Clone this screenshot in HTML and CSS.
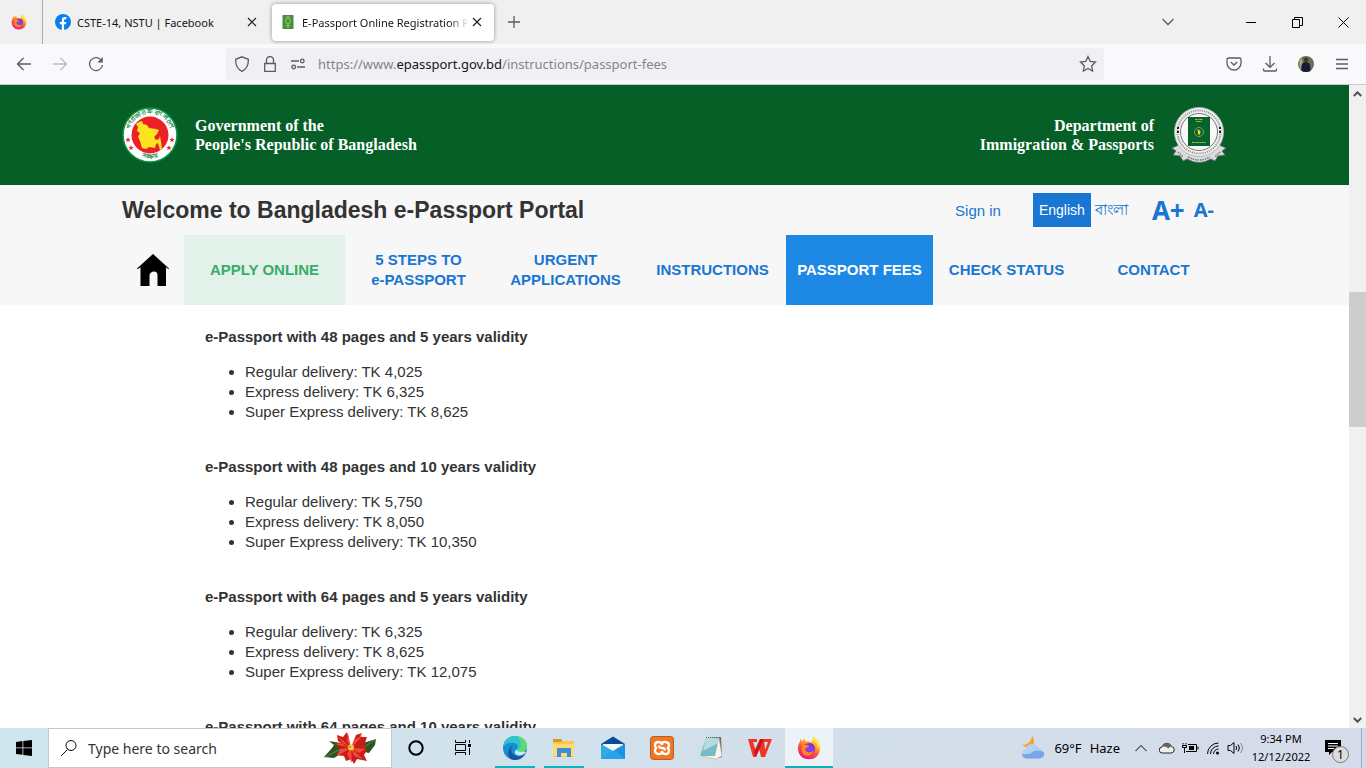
FILE: index.html
```html
<!DOCTYPE html>
<html lang="en">
<head>
<meta charset="utf-8">
<title>E-Passport Online Registration Portal</title>
<link rel="stylesheet" href="styles.css">
</head>
<body>
<svg class="defs" aria-hidden="true">
  <defs>
    <linearGradient id="flame" x1="0.8" y1="0" x2="0.3" y2="1">
      <stop offset="0" stop-color="#fff44f"/><stop offset="0.35" stop-color="#ffa51f"/><stop offset="0.65" stop-color="#ff4a40"/><stop offset="1" stop-color="#e5158a"/>
    </linearGradient>
    <symbol id="firefox" viewBox="0 0 24 24">
      <path d="M16.500 0.500c1.500 2 3.500 3.400 4.600 5.500 3.600 5.700 2.100 17.300-9.100 17.300C5.300 23.300 1 18.500 1 12.500c0-2.700.7-5 2-7l.2-2.500 2.300 2.200 1.800-2.900 1.300 3.200c2-.7 4.300-.2 6 1z" fill="url(#flame)"/>
      <path d="M15.800.5c-.8 3 .5 4.300 2.500 6 2.300 2 2.700 5 1.700 7.500 3.500-4 1.500-8.500-.3-10.500C18.300 2 16.700 1.500 15.800.5z" fill="#ffe443"/>
      <circle cx="12" cy="13" r="6" fill="#8b3be8"/>
      <path d="M5.500 9c3-.8 5.500.3 7 1.800-3 0-2.800 1.500-4.500 2.300.5 3.800 6 4.500 8.500 1.500-.8 4.500-5 6-8.500 4.500S4 13 5.500 9z" fill="#ff8a16"/>
      <path d="M13 7c3 .5 5 3 4.500 6.500-.5-2-1.500-3.500-4-4.500z" fill="#6e2fd0"/>
    </symbol>
  </defs>
</svg>
<div class="desktop">
  <div class="tabbar">
    <button class="pinned" aria-label="Firefox View"><svg width="16" height="16"><use href="#firefox"/></svg></button>
    <div class="tab">
      <svg width="16" height="16" viewBox="0 0 16 16"><circle cx="8" cy="8" r="8" fill="#0d7df2"/><path d="M6.800 16V10.300H4.800V8h2V6.300c0-2.100 1.200-3.200 3-3.200l1.600.1v2h-1c-1 0-1.300.6-1.300 1.200V8h2.200l-.4 2.300H9.100V16z" fill="#fff"/></svg>
      <span class="tab-title">CSTE-14, NSTU | Facebook</span>
      <button class="tab-close" aria-label="Close tab"><svg width="10" height="10" viewBox="0 0 10 10"><path d="M1 1l8 8M9 1L1 9" class="dark"/></svg></button>
    </div>
    <div class="tab active">
      <svg width="16" height="16" viewBox="0 0 16 16"><path d="M2.500 1h11v14h-11z" fill="#3f9142"/><circle cx="8" cy="7" r="2.500" fill="none" stroke="#a9c653"/><path d="M6 3h4M6 11.500h4M8 10v4" stroke="#a9c653"/></svg>
      <span class="tab-title fade">E-Passport Online Registration Portal</span>
      <button class="tab-close" aria-label="Close tab"><svg width="10" height="10" viewBox="0 0 10 10"><path d="M1 1l8 8M9 1L1 9" class="dark"/></svg></button>
    </div>
    <button class="new-tab" aria-label="New tab"><svg width="12" height="12" viewBox="0 0 12 12"><path d="M6 0v12M0 6h12" class="line"/></svg></button>
    <div class="window-controls">
      <button class="list-tabs" aria-label="List all tabs"><svg width="14" height="8" viewBox="0 0 14 8"><path d="M1.500 1L7 6.500 12.500 1" class="line"/></svg></button>
      <button aria-label="Minimize"><svg width="11" height="11" viewBox="0 0 11 11"><path d="M0 5.500h10" class="black"/></svg></button>
      <button aria-label="Restore"><svg width="11" height="11" viewBox="0 0 11 11"><path d="M.5 2.500h7v8h-7zM2.500 2V.5h8v8H8" class="black"/></svg></button>
      <button aria-label="Close"><svg width="11" height="11" viewBox="0 0 11 11"><path d="M.5.500l10 10M10.500.500l-10 10" class="black"/></svg></button>
    </div>
  </div>

  <div class="toolbar">
    <div class="nav-buttons">
      <button aria-label="Back"><svg width="16" height="16" viewBox="0 0 16 16"><path d="M15 8H1.500M7.500 2L1.500 8l6 6" class="line"/></svg></button>
      <button aria-label="Forward" disabled><svg width="16" height="16" viewBox="0 0 16 16"><path d="M1 8h13.500M8.500 2l6 6-6 6" class="line"/></svg></button>
      <button aria-label="Reload"><svg width="16" height="16" viewBox="0 0 16 16"><path d="M13.500 4.500A6.500 6.500 0 1 0 14.500 9" class="line"/><path d="M14.800 1v5.500H9.300z" fill="#5b5b66"/></svg></button>
    </div>
    <div class="address">
      <svg width="16" height="16" viewBox="0 0 16 16"><path d="M8 .8l6.300 2.500c.3 5.500-1.500 9.700-6.300 12C3.200 13 1.400 8.800 1.700 3.300z" class="line"/></svg>
      <svg width="16" height="16" viewBox="0 0 16 16"><path d="M2.700 7.500h10.600v8H2.700zM4.500 7V4a3.500 3.500 0 0 1 7 0v3" class="line"/></svg>
      <svg width="16" height="16" viewBox="0 0 16 16"><path d="M1 5h8M7 11h8" class="line"/><circle cx="12.300" cy="5" r="1.800" class="line"/><circle cx="3.700" cy="11" r="1.800" class="line"/></svg>
      <p class="url">https://www.<span class="domain">epassport.gov.bd</span>/instructions/passport-fees</p>
      <button aria-label="Bookmark"><svg width="18" height="18" viewBox="0 0 18 18"><path d="M9 1.500l2.300 4.800 5.200.7-3.800 3.700.9 5.300L9 13.400 4.400 16l.9-5.300L1.500 7l5.200-.7z" class="line"/></svg></button>
    </div>
    <div class="tool-buttons">
      <button aria-label="Pocket"><svg width="16" height="16" viewBox="0 0 16 16"><path d="M2.500 2h11q1.500 0 1.500 1.500V7a7 7 0 0 1-14 0V3.500Q1 2 2.500 2zM4.800 6L8 9l3.200-3" class="line"/></svg></button>
      <button aria-label="Downloads"><svg width="16" height="16" viewBox="0 0 16 16"><path d="M8 0v11M3.500 7L8 11.300 12.500 7M1.500 12.500v1.500q0 1 1 1h11q1 0 1-1v-1.500" class="line"/></svg></button>
      <button aria-label="Account"><svg width="16" height="16" viewBox="0 0 16 16"><circle cx="8" cy="8" r="8" fill="#66704f"/><path d="M1 4l3-2 1 8-3 3z" fill="#a6a789"/><path d="M3.500 15c0-5-1-8 4.500-9 5.500 1 4 5 4.500 9-2.500 1.300-6.500 1.300-9 0z" fill="#171a35"/><circle cx="8" cy="3.800" r="2.300" fill="#4c302a"/></svg></button>
      <button aria-label="Menu"><svg width="14" height="14" viewBox="0 0 14 14"><path d="M1 2.500h12M1 7h12M1 11.500h12" class="line"/></svg></button>
    </div>
  </div>

  <div class="viewport">
    <div class="page">
      <header class="banner">
        <div class="container banner-inner">
          <svg width="56" height="56" viewBox="0 0 56 56" role="img" aria-label="Government seal">
            <circle cx="28" cy="28" r="27" fill="#fff" stroke="#0a9444" stroke-width="1.500"/>
            <path id="arc-top" d="M7.500 32A21 21 0 1 1 48.500 32" fill="none"/>
            <path id="arc-bottom" d="M11 45A25 25 0 0 0 45 45" fill="none"/>
            <text class="seal-text" lang="bn" text-anchor="middle"><textPath href="#arc-top" startOffset="50%">গণপ্রজাতন্ত্রী বাংলাদেশ</textPath></text>
            <text class="seal-text" lang="bn" text-anchor="middle"><textPath href="#arc-bottom" startOffset="50%">সরকার</textPath></text>
            <circle cx="28" cy="28" r="18.500" fill="#ed2027"/>
            <path d="M17 15l3-1 1 3 4 1 2 3 7 1 3 1-2 4-3 3 2 3 3-1 1-3 1 6 1 7-2 1-2-7-2 1-1 4-6-1-3 2-4-1-2-7-2-4 2-4-3-2 1-4-2-3z" fill="#fce421"/>
            <path id="star" d="M6 30l.7 2 2 .1-1.600 1.200.6 2L6 34.100l-1.700 1.200.6-2-1.600-1.200 2-.1z" fill="#ed2027"/>
            <use href="#star" x="3" y="8"/><use href="#star" x="44"/><use href="#star" x="41" y="8"/>
          </svg>
          <p class="org">Government of the<br>People's Republic of Bangladesh</p>
          <p class="org right">Department of<br>Immigration &amp; Passports</p>
          <svg width="56" height="58" viewBox="0 0 56 58" role="img" aria-label="Department seal">
            <path d="M1 42l7-3 6 5q14 10 28 0l6-5 7 3-4 3 3 4-7 1-3 5-4-2q-12 7-24 0l-4 2-3-5-7-1 3-4z" fill="#dcdcdc" stroke="#667" stroke-width=".8"/>
            <path d="M7 46l5 5M49 46l-5 5M17 51q11 6 22 0" fill="none" stroke="#777" stroke-width="1.500" stroke-dasharray="1.500 1"/>
            <circle cx="28" cy="26" r="24.500" fill="#f1f1f1" stroke="#b5b5b5"/>
            <circle cx="28" cy="26" r="21.500" fill="none" stroke="#999" stroke-width="2" stroke-dasharray="1.200 1"/>
            <circle cx="28" cy="26" r="18.500" fill="#f8f8f8" stroke="#777"/>
            <path d="M17 11h22v29H17z" fill="#07632b"/>
            <circle cx="28" cy="26" r="4.500" fill="none" stroke="#7f9a61"/><path d="M26.500 23l3 2-.5 4-2-1z" fill="#f0d52b"/>
            <path d="M24 13.500h8M25 15.500h6M21 36.500h14" stroke="#b6b751" stroke-dasharray="2 .5"/>
            <path d="M7 21v2M7 25v2M49 21v2M49 25v2" stroke="#222" stroke-width="2"/>
          </svg>
        </div>
      </header>
      <div class="heading">
        <div class="container heading-inner">
          <h1>Welcome to Bangladesh e-Passport Portal</h1>
          <a class="sign-in" href="#">Sign in</a>
          <div class="languages">
            <button class="lang current">English</button>
            <button class="lang bangla" lang="bn">বাংলা</button>
          </div>
          <div class="font-size"><button class="larger">A+</button><button class="smaller">A-</button></div>
        </div>
        <nav class="container menu">
          <a href="#" aria-label="Home"><svg width="32" height="34" viewBox="0 0 32 34"><path d="M16 1l16 14.500-.5.800-2.500-2V33h-8.500V22q0-3.500-3.500-3.500T12.500 22v11H3.500V14.300l-3 2-.5-.8z" fill="#000"/></svg></a>
          <a href="#" class="apply">APPLY ONLINE</a>
          <a href="#">5 STEPS TO<br>e-PASSPORT</a>
          <a href="#">URGENT<br>APPLICATIONS</a>
          <a href="#">INSTRUCTIONS</a>
          <a href="#" class="selected">PASSPORT FEES</a>
          <a href="#">CHECK STATUS</a>
          <a href="#">CONTACT</a>
        </nav>
      </div>
      <main class="fees">
        <section>
          <h2>e-Passport with 48 pages and 5 years validity</h2>
          <ul><li>Regular delivery: TK 4,025</li><li>Express delivery: TK 6,325</li><li>Super Express delivery: TK 8,625</li></ul>
        </section>
        <section>
          <h2>e-Passport with 48 pages and 10 years validity</h2>
          <ul><li>Regular delivery: TK 5,750</li><li>Express delivery: TK 8,050</li><li>Super Express delivery: TK 10,350</li></ul>
        </section>
        <section>
          <h2>e-Passport with 64 pages and 5 years validity</h2>
          <ul><li>Regular delivery: TK 6,325</li><li>Express delivery: TK 8,625</li><li>Super Express delivery: TK 12,075</li></ul>
        </section>
        <section>
          <h2>e-Passport with 64 pages and 10 years validity</h2>
        </section>
      </main>
    </div>
    <div class="scrollbar">
      <button aria-label="Scroll up"><svg width="9" height="6" viewBox="0 0 9 6"><path d="M.8 5L4.500 1.300 8.200 5" class="arrow"/></svg></button>
      <div class="track"><div class="thumb"></div></div>
      <button aria-label="Scroll down"><svg width="9" height="6" viewBox="0 0 9 6"><path d="M.8 1l3.700 3.700L8.200 1" class="arrow"/></svg></button>
    </div>
  </div>

  <footer class="taskbar">
    <button class="start" aria-label="Start"><svg width="16" height="16" viewBox="0 0 16 16"><path d="M0 2l6.500-.9v6.400H0zM7.300 1L16 0v7.500H7.300zM0 8.300h6.500v6.500L0 14zM7.300 8.300H16V16l-8.700-1.100z"/></svg></button>
    <label class="search">
      <svg width="18" height="18" viewBox="0 0 18 18"><circle cx="11" cy="6.500" r="5" class="glyph"/><path d="M7.500 10.500L1 17" class="glyph"/></svg>
      <input type="text" placeholder="Type here to search" aria-label="Search">
      <svg width="54" height="34" viewBox="0 0 54 34">
        <path d="M18 12L6 10l5 4-2 3-8 9 10 1 10-6zM37 13l16-5-1 6-6 8-9-2z" fill="#2e5424"/>
        <path d="M2 26l16-8M38 18l14-9" stroke="#668447" fill="none"/>
        <path d="M28 17L24 1l-4 5-6-2 1 6 3 2-7 1 8 5-6 6 8 1 2 5 5-2 3 5 3-5 10 2-3-6 3-5-3-4 3-9-7 0 2-4-6 2z" fill="#c91d18"/>
        <path d="M28 17L15 5l6 9zM28 17l-3-15-1 8zM28 17l12-13-9 5zM28 17l14 1-6 4zM28 17l12 11-9-3zM28 17l1 15-5-9zM28 17l-14 8 3-7zM28 17l-16-4 8-1z" fill="#f5483a"/>
        <circle cx="28" cy="16.500" r="3" fill="#f2cf32"/><circle cx="27" cy="16" r="1" fill="#93992c"/>
      </svg>
    </label>
    <div class="apps">
      <button class="system" aria-label="Cortana"><svg width="18" height="18" viewBox="0 0 18 18"><circle cx="9" cy="9" r="6.700" fill="none" stroke="#000" stroke-width="2"/></svg></button>
      <button class="system" aria-label="Task view"><svg width="18" height="18" viewBox="0 0 18 18"><path d="M1.500 1v2.500h10V1M1.500 5.500h10v6h-10zM1.500 16v-2.500h10V16M15.500 1v3M15.500 9v7" class="glyph"/><path d="M14 5h3v3h-3z"/></svg></button>
      <button class="open" aria-label="Edge"><svg width="24" height="24" viewBox="0 0 24 24"><circle cx="12" cy="12" r="12" fill="#168ed4"/><path d="M0 11C1 3 7 0 12 0c7 0 12 5 12 10 0 4-3 6-6 6s-5-1-4-3c1-1 2-5-3-6C6 6 2 8 0 11z" fill="#32c4cc"/><path d="M14 .2C20 1 24 5 24 10c0 4-3 6-6 6s-4.500-1-4-2.500C20 13 19 5 14 .2z" fill="#5fdc70"/><path d="M10 9c-3 3-2 8 1 10 4 2.500 8 1.500 11-1-3 5-8 7-13 5.500C3 21 5 12 10 9z" fill="#1455a0"/><path d="M14 13.500c-.5 2 3 3 6 2l3 .5c-2 3-6 4-9 3-3-1.500-3-4 0-5.500z" fill="#d5e6ee"/></svg></button>
      <button class="open" aria-label="File Explorer"><svg width="24" height="24" viewBox="0 0 24 24"><path d="M1 3h8l2 2h10q1 0 1 1v15H1z" fill="#f9c846"/><path d="M1 3h8l1 1.500L9 6H1z" fill="#d69b16"/><path d="M1 8h21v12H1z" fill="#ffdb73"/><path d="M5 21v-8q0-1 1-1h12q1 0 1 1v8h-4v-4H9v4z" fill="#3c8edb"/></svg></button>
      <button aria-label="Mail"><svg width="24" height="24" viewBox="0 0 24 24"><path d="M0 8l12-7.500L24 8v3H0z" fill="#0b4b9c"/><path d="M2 8h20v10H2z" fill="#f4f7fa"/><path d="M0 8l12 7L24 8v15H0z" fill="#2fa9e8"/><path d="M24 8v15L12 15z" fill="#1c92de"/><path d="M0 23l14-9 10 9z" fill="#27a4e9"/></svg></button>
      <button aria-label="XAMPP"><svg width="24" height="24" viewBox="0 0 24 24"><rect x=".5" y=".5" width="23" height="23" rx="3" fill="#f17822" stroke="#b45c22"/><path d="M12 9Q12 6 8.500 6T5 9q0 2.500 2 3-2 .5-2 3t3.500 3T12 15q0 3 3.500 3t3.500-3q0-2.500-2-3 2-.5 2-3t-3.500-3T12 9zM9 9.500q0 2.500 3 2.500t3 2.500" fill="none" stroke="#fff" stroke-width="2.300"/></svg></button>
      <button aria-label="Notepad"><svg width="24" height="24" viewBox="0 0 24 24"><path d="M7 2l15-1 1 20-3 1z" fill="#70695b"/><path d="M20 2l3 18-6 3-14-3z" fill="#f7f5e9" stroke="#aaa698" stroke-width=".5"/><path d="M7 2h13l-4 18H1z" fill="#79bac9"/><path d="M7 2h13l-1 5L4 15z" fill="#b4dce0"/><path d="M7 1.500h13" stroke="#667" stroke-dasharray="1 1"/></svg></button>
      <button aria-label="WPS Office"><svg width="24" height="24" viewBox="0 0 24 24"><path d="M0 3h9v3H5l3 9 4-12h4l1 11 3-8h-6l1-3h9l-7 18h-4l-2-9-3 9H5z" fill="#f33323"/><path d="M12 3h4l-8 18-2-5z" fill="#c51719"/></svg></button>
      <button class="open focused" aria-label="Firefox"><svg width="24" height="24"><use href="#firefox"/></svg></button>
    </div>
    <div class="tray">
      <button class="weather"><svg width="26" height="26" viewBox="0 0 26 26"><path d="M12 1c4 5 2 10-3 13l-7-4c5 0 9-3 10-9z" fill="#f5a623"/><path d="M6 23.500a5 5 0 0 1-.5-9.500 7 7 0 0 1 13-1A5.500 5.500 0 0 1 19.500 23.500z" fill="#b5d0f5"/><path d="M2 19q8 1 12-3 6-1 10 1 1 6-5 6.500H6q-4-1-4-4.500z" fill="#78a5e6"/></svg><span>69°F</span><span>Haze</span></button>
      <button class="more" aria-label="Hidden icons"><svg width="14" height="10" viewBox="0 0 14 10"><path d="M1.500 8L7 2.500 12.500 8" class="glyph"/></svg></button>
      <button aria-label="OneDrive"><svg width="16" height="12" viewBox="0 0 16 12"><path d="M3.500 11a3 3 0 0 1-.5-6 5 5 0 0 1 9.500-.5A3.300 3.300 0 0 1 12.500 11z" fill="#eee" stroke="#222"/><path d="M3 5a5 5 0 0 1 9.500-.5q-2 0-3 2Q6 3.500 3 5z" fill="#666"/></svg></button>
      <button aria-label="Battery"><svg width="17" height="12" viewBox="0 0 17 12"><path d="M6 2.500h8.500v7H4M16 4.500v3M1 1v1.500M4 1v1.500M.5 3.500h4v2h-4zM2.500 6v5" class="glyph"/><path d="M7 4h5v4H7z"/></svg></button>
      <button aria-label="Wi-Fi"><svg width="14" height="14" viewBox="0 0 14 14"><path d="M1.500 13A11 11 0 0 1 12.500 2M4.500 13a8 8 0 0 1 8-8M7.500 13a5 5 0 0 1 5-5" class="glyph"/><circle cx="11.500" cy="12" r="1.500"/></svg></button>
      <button aria-label="Volume"><svg width="17" height="14" viewBox="0 0 17 14"><path d="M1 4.500h2.500L7 1.500v11l-3.500-3H1zM9 5q1.500 2 0 4M11 3.500q3 3.500 0 7" class="glyph"/><path d="M13.500 2q4 5 0 10" fill="none" stroke="#888"/></svg></button>
      <div class="clock"><time>9:34 PM</time><time>12/12/2022</time></div>
      <button class="notifications" aria-label="Notifications, 1 new"><svg width="16" height="16" viewBox="0 0 16 16"><path d="M0 0h16v12H7l-3 3v-3H0z"/><path d="M3 3.500h10M3 6h10M3 8.500h6" stroke="#fff"/></svg><span class="badge">1</span></button>
      <div class="show-desktop"></div>
    </div>
  </footer>
</div>
</body>
</html>
```

FILE: styles.css
```css
* { box-sizing: border-box; }
body { margin: 0; font-family: "Liberation Sans", Arial, sans-serif; color: #333; }
h1, h2, p, ul { margin: 0; }
button { margin: 0; padding: 0; border: 0; background: none; color: inherit; font: inherit; display: flex; align-items: center; justify-content: center; }
a { text-decoration: none; color: #1976d2; }
svg { display: block; flex: none; }
.defs { position: absolute; width: 0; height: 0; }
.line { fill: none; stroke: #5b5b66; stroke-width: 1.3; }
.dark { fill: none; stroke: #222; stroke-width: 1.2; }
.black, .glyph { fill: none; stroke: #000; }
.arrow { fill: none; stroke: #505050; stroke-width: 2; }

.desktop { height: 100vh; display: flex; flex-direction: column; overflow: hidden; }
.tabbar, .toolbar, .taskbar { flex: none; display: flex; align-items: center; }

/* Browser chrome */
.tabbar { height: 44px; background: #f0f0f0; font: 11px "Noto Sans", "Open Sans", sans-serif; color: #15141a; }
.pinned { width: 43px; height: 44px; padding-right: 4px; border-right: 1px solid #aaa; }
.tab { width: 222px; height: 37px; margin-left: 4px; padding: 0 9px 0 8px; display: flex; align-items: center; border-radius: 4px; }
.tab.active { margin-left: 3px; background: #fff; box-shadow: 0 0 4px rgba(0, 0, 0, .4); }
.tab-title { flex: 1; min-width: 0; margin-left: 6px; overflow: hidden; white-space: nowrap; }
.fade { mask-image: linear-gradient(to right, #000 88%, transparent); }
.tab-close { width: 16px; height: 16px; }
.new-tab { width: 40px; height: 36px; }
.window-controls { margin-left: auto; display: flex; height: 44px; }
.window-controls button { width: 46px; }
.window-controls .list-tabs { width: 36px; margin-right: 42px; }
.toolbar { height: 41px; background: #f9f9fb; border-bottom: 1px solid #ccc; }
.nav-buttons { width: 226px; padding-left: 6px; display: flex; }
.nav-buttons button { width: 36px; height: 36px; }
.nav-buttons button:disabled { opacity: .4; }
.address { flex: 1; height: 32px; padding: 0 7px 0 8px; display: flex; align-items: center; gap: 12px; background: #f0f0f4; border-radius: 4px; }
.url { flex: 1; font: 13px "Noto Sans", "Open Sans", sans-serif; color: #84848b; }
.domain { color: #15141a; }
.tool-buttons { width: 262px; padding-right: 6px; display: flex; justify-content: flex-end; }
.tool-buttons button { width: 36px; height: 36px; }

/* Page */
.viewport { flex: 1; min-height: 0; display: flex; background: #fff; }
.page { flex: 1; min-width: 0; overflow: hidden; }
.container { max-width: 1105px; margin: 0 auto; }
.banner { background: #055f26; color: #fff; }
.banner-inner { height: 100px; display: flex; align-items: center; gap: 17px; }
.seal-text { font: bold 6px "Noto Sans", sans-serif; fill: #0b7a3b; }
.org { font: bold 16px/19px "Liberation Serif", serif; }
.org.right { margin-left: auto; text-align: right; }
.heading { background: #f7f7f7; }
.heading-inner { min-height: 50px; display: flex; align-items: center; }
h1 { flex: 1; font-size: 23px; line-height: 28px; }
.sign-in { margin-right: 32px; font-size: 15px; }
.languages { display: flex; font-size: 14px; color: #1976d2; }
.lang { height: 34px; padding: 0 6px; }
.lang.current { background: #1976d2; color: #fff; }
.lang.bangla { font-size: 15px; padding: 0 4px; }
.font-size { margin: 0 13px 0 20px; display: flex; align-items: center; gap: 9px; font-family: "Noto Sans", sans-serif; font-weight: bold; line-height: 32px; color: #1976d2; }
.larger { font-size: 26px; }
.smaller { font-size: 20px; }
.menu { display: grid; grid-template-columns: 62px 161px repeat(6, 1fr); min-height: 70px; font-size: 15px; line-height: 20px; font-weight: bold; text-align: center; }
.menu a { display: flex; align-items: center; justify-content: center; }
.menu .apply { background: #e2f2ea; color: #38ad69; }
.menu .selected { background: #1e88e5; color: #fff; }
.fees { padding: 22px 205px 0; display: flex; flex-direction: column; gap: 35px; font-size: 15px; line-height: 20px; }
.fees section { display: flex; flex-direction: column; gap: 15px; }
h2 { font-size: 15px; line-height: 20px; }
ul { padding-left: 40px; }

.scrollbar { width: 17px; display: flex; flex-direction: column; background: #f0f0f0; }
.scrollbar button { height: 17px; }
.track { flex: 1; display: grid; grid-template-rows: 190fr 135fr 284fr; }
.thumb { grid-row: 2; background: #cdcdcd; }

/* Taskbar */
.taskbar { height: 40px; background: linear-gradient(to right, #cfe6ee, #d2e0eb 50%, #d5dbea); color: #000; font: 14px "Noto Sans", "Open Sans", sans-serif; }
.start { width: 48px; height: 40px; }
.search { width: 344px; height: 40px; padding: 0 14px 0 11px; display: flex; align-items: center; gap: 10px; background: #fff; border: 1px solid #c6c6c6; }
.search input { flex: 1; min-width: 0; padding: 0; border: 0; outline: 0; background: none; font: inherit; }
.search input::placeholder { color: #333; opacity: 1; }
.apps { display: flex; }
.apps button { width: 40px; height: 40px; margin-left: 9px; border: solid transparent; border-width: 2px 0; background-clip: border-box; }
.apps .system { width: 47px; margin-left: 0; }
.apps .open { border-bottom-color: #00b7c3; }
.apps .focused { width: 48px; margin-left: 5px; background-color: #edf2f7; }
.tray { margin-left: auto; height: 40px; display: flex; align-items: center; gap: 7px; }
.weather { gap: 8px; margin-right: 7px; font-size: 13px; }
.more { margin-right: 4px; }
.clock { width: 60px; margin-right: 3px; display: flex; flex-direction: column; align-items: center; font-size: 11px; line-height: 18px; }
.notifications { position: relative; width: 24px; height: 40px; margin-right: 9px; }
.badge { position: absolute; left: 11px; top: 18px; width: 17px; height: 17px; border: 1px solid #777; border-radius: 50%; background: #ddd; font-size: 12px; line-height: 15px; text-align: center; }
.show-desktop { width: 5px; height: 40px; border-left: 1px solid #a5adb9; }
```
